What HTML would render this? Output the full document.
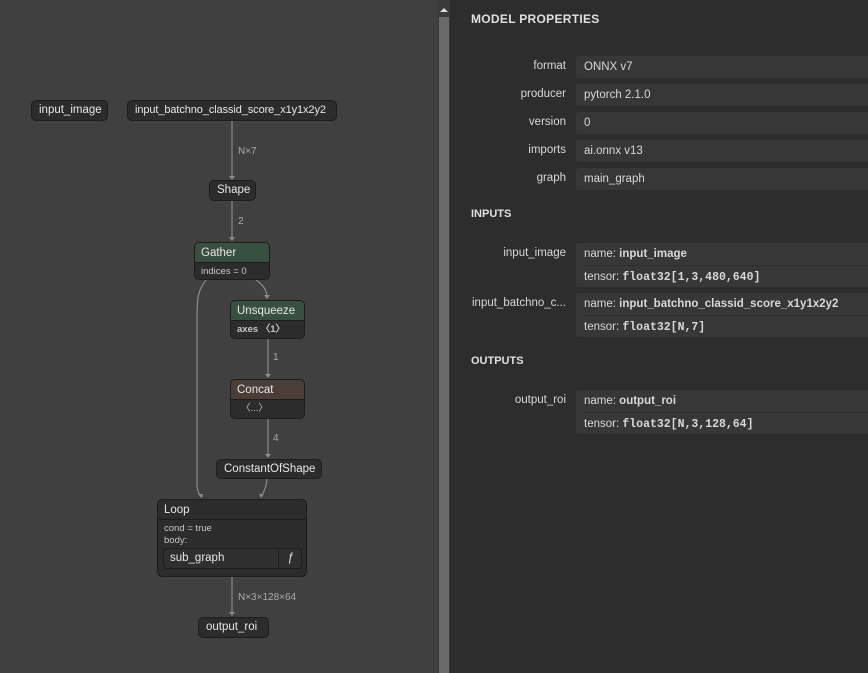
<!DOCTYPE html>
<html><head><meta charset="utf-8"><style>
*{margin:0;padding:0;box-sizing:border-box}
body{width:868px;height:673px;overflow:hidden;background:#404040;font-family:"Liberation Sans",sans-serif;font-size:11px;color:#dcdcdc;position:relative}
.a{position:absolute}
.n{position:absolute;background:#2c2c2c;border:1px solid #1d1d1d;border-radius:5px;color:#e6e6e6;font-size:11.5px;line-height:19px;padding:0 7px;white-space:nowrap}
.h{height:20px;line-height:20px;padding:0 6px;border-bottom:1px solid #1d1d1d;border-radius:4px 4px 0 0}
.b{font-size:9.5px;color:#c8c8c8;padding:0 6px;line-height:17px}
.lbl{position:absolute;font-size:10px;color:#aaa}
#side{position:absolute;left:450px;top:0;width:418px;height:673px;background:#2d2d2d}
.k{position:absolute;right:302px;font-size:11.5px;color:#d8d8d8;text-align:right;white-space:nowrap}
.v{position:absolute;left:126px;width:292px;background:#373737;border-radius:3px 0 0 3px;font-size:11.5px;color:#d8d8d8;padding-left:8px;line-height:22px}
.v2 div{height:22px;line-height:22px}
.v2 div+div{border-top:1px solid #2d2d2d}
.m{font-family:"Liberation Mono",monospace;font-weight:bold}
.sec{position:absolute;left:21px;font-weight:bold;font-size:11px;color:#e0e0e0}
</style></head><body>
<svg class="a" style="left:0;top:0" width="438" height="673">
<g stroke="#8a8a8a" fill="none" stroke-width="1.2">
<path d="M232 120V178"/><path d="M232 200V239"/><path d="M268 338V376"/><path d="M268 418V456"/><path d="M232 576V614"/>
<path d="M207 279C197 290 197 300 197 320V485C197 492 200 495 201 497"/>
<path d="M255 279C264 286 267 290 267 298"/>
<path d="M267 478C267 486 264 492 261 497"/>
</g>
<g fill="#8a8a8a"><path d="M229 176h6l-3 4z"/><path d="M229 237h6l-3 4z"/><path d="M264 295h6l-3 4z"/><path d="M265 374h6l-3 4z"/><path d="M265 454h6l-3 4z"/><path d="M229 612h6l-3 4z"/><path d="M198 494h5l-1 4z"/><path d="M259 494h5l-3 4z"/></g>
</svg>
<div class="n" style="left:31px;top:100px;width:77px;height:21px">input_image</div>
<div class="n" style="left:127px;top:100px;width:210px;height:21px;font-size:11px;letter-spacing:-0.1px">input_batchno_classid_score_x1y1x2y2</div>
<div class="lbl" style="left:238px;top:146px">N×7</div>
<div class="n" style="left:209px;top:180px;width:47px;height:21px">Shape</div>
<div class="lbl" style="left:238px;top:216px">2</div>
<div class="n" style="left:194px;top:242px;width:76px;height:38px;padding:0"><div class="h" style="background:#38503f">Gather</div><div class="b">indices = 0</div></div>
<div class="n" style="left:230px;top:300px;width:75px;height:39px;padding:0"><div class="h" style="background:#38503f">Unsqueeze</div><div class="b" style="font-weight:bold">axes 〈1〉</div></div>
<div class="lbl" style="left:273px;top:352px">1</div>
<div class="n" style="left:230px;top:379px;width:75px;height:40px;padding:0"><div class="h" style="background:#4b3d38">Concat</div><div class="b" style="padding-left:10px">〈...〉</div></div>
<div class="lbl" style="left:273px;top:433px">4</div>
<div class="n" style="left:216px;top:459px;width:106px;height:20px">ConstantOfShape</div>
<div class="n" style="left:157px;top:499px;width:150px;height:78px;padding:0"><div class="h">Loop</div><div class="b" style="line-height:12px;padding-top:3px">cond = true<br>body:</div>
<div class="a" style="left:5px;top:48px;width:139px;height:21px;border:1px solid #1d1d1d;border-radius:4px;background:#2f2f2f;font-size:11.5px;line-height:19px;padding-left:6px">sub_graph<span class="a" style="left:114px;top:0;width:24px;height:19px;border-left:1px solid #1d1d1d;text-align:center;font-style:italic">ƒ</span></div></div>
<div class="lbl" style="left:238px;top:592px">N×3×128×64</div>
<div class="n" style="left:198px;top:617px;width:71px;height:21px">output_roi</div>
<div class="a" style="left:438px;top:0;width:12px;height:673px;background:#3a3a3a"></div>
<div class="a" style="left:439px;top:17px;width:10px;height:656px;background:#6a6a6a"></div>
<div class="a" style="left:440px;top:8px;width:0;height:0;border-left:4px solid transparent;border-right:4px solid transparent;border-bottom:4px solid #ddd"></div>
<div id="side">
<div class="sec" style="top:12px;font-size:12px;letter-spacing:.3px">MODEL PROPERTIES</div>
<div class="k" style="top:60px">format</div><div class="v" style="top:56px">ONNX v7</div>
<div class="k" style="top:88px">producer</div><div class="v" style="top:84px">pytorch 2.1.0</div>
<div class="k" style="top:116px">version</div><div class="v" style="top:112px">0</div>
<div class="k" style="top:144px">imports</div><div class="v" style="top:140px">ai.onnx v13</div>
<div class="k" style="top:172px">graph</div><div class="v" style="top:168px">main_graph</div>
<div class="sec" style="top:208px">INPUTS</div>
<div class="k" style="top:247px">input_image</div>
<div class="v v2" style="top:243px"><div>name: <b>input_image</b></div><div>tensor: <span class="m">float32[1,3,480,640]</span></div></div>
<div class="k" style="top:297px">input_batchno_c...</div>
<div class="v v2" style="top:293px"><div>name: <b>input_batchno_classid_score_x1y1x2y2</b></div><div>tensor: <span class="m">float32[N,7]</span></div></div>
<div class="sec" style="top:355px">OUTPUTS</div>
<div class="k" style="top:394px">output_roi</div>
<div class="v v2" style="top:390px"><div>name: <b>output_roi</b></div><div>tensor: <span class="m">float32[N,3,128,64]</span></div></div>
</div>
</body></html>
